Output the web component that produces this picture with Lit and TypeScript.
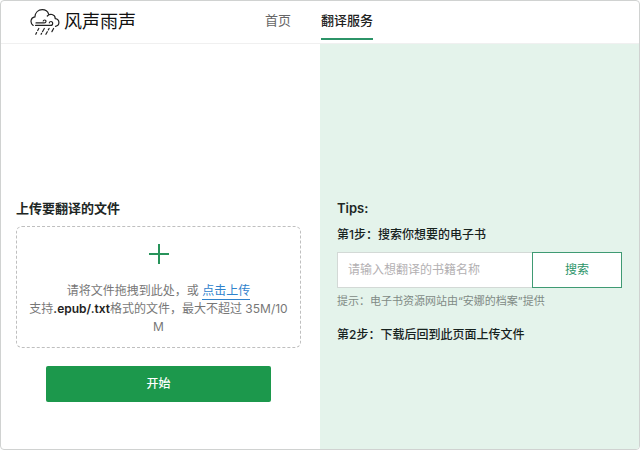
import { LitElement, html, css } from "lit";
import { customElement } from "lit/decorators.js";

@customElement("app-root")
export class AppRoot extends LitElement {
  static styles = css`
    :host {
      display: block;
      font-family: Inter, "Noto Sans CJK SC", sans-serif;
      font-size: 12px;
      line-height: 18px;
      color: #202624;
    }
    * {
      box-sizing: border-box;
    }
    .frame {
      display: flex;
      flex-direction: column;
      min-height: 100vh;
      border: 1px solid #d0d2d1;
      border-radius: 4px;
      overflow: hidden;
      background: #fff;
    }
    .header {
      display: grid;
      grid-template-columns: minmax(0, 1fr) minmax(0, 1fr);
      height: 43px;
      border-bottom: 1px solid #f0f0f0;
    }
    .brand {
      display: flex;
      align-items: center;
      gap: 4px;
      padding-left: 29px;
      font-size: 18px;
      line-height: 24px;
      color: #111;
      text-decoration: none;
    }
    .logo {
      width: 30px;
      height: 28px;
    }
    .nav {
      display: flex;
      gap: 30px;
      margin-left: -55px;
    }
    .nav-link {
      height: 39px;
      padding-top: 9px;
      font-size: 13px;
      line-height: 20px;
      color: #666;
      text-decoration: none;
      border-bottom: 2px solid transparent;
    }
    .nav-link.active {
      color: #222;
      font-weight: 500;
      border-bottom-color: #2c9468;
    }
    .columns {
      flex: 1;
      display: grid;
      grid-template-columns: minmax(0, 1fr) minmax(0, 1fr);
    }
    .upload {
      padding: 154px 19px 32px 15px;
    }
    .tips {
      padding: 154px 17px 32px;
      background: #e4f3eb;
    }
    .title {
      margin: 0;
      font-size: 13px;
      line-height: 20px;
      font-weight: 600;
    }
    .drop {
      margin-top: 8px;
      height: 122px;
      padding: 17px 8px 0;
      border: 1px dashed #bfbfbf;
      border-radius: 6px;
      text-align: center;
      color: #777;
    }
    .plus {
      display: block;
      width: 20px;
      height: 20px;
      margin: 0 auto 18px;
    }
    .drop p {
      margin: 0;
      word-break: break-all;
    }
    .drop strong {
      color: #222;
      font-weight: 600;
    }
    .pick {
      display: inline-block;
      line-height: 16px;
      color: #2f82cc;
      text-decoration: none;
      border-bottom: 1px solid #2f82cc;
    }
    .start {
      display: block;
      width: calc(100% - 60px);
      height: 36px;
      margin: 18px auto 0;
      padding: 0;
      border: 0;
      border-radius: 2px;
      background: #1c984c;
      color: #fff;
      font: inherit;
      font-weight: 500;
    }
    .step {
      display: block;
      margin: 8px 0 0;
      font-size: 12px;
      line-height: 18px;
      font-weight: 500;
      color: #17221e;
    }
    .search {
      display: flex;
      height: 36px;
      margin-top: 8px;
    }
    .query {
      flex: 1;
      min-width: 0;
      padding: 0 10px;
      border: 1px solid #d3d9d6;
      border-right: 0;
      border-radius: 0;
      background: #fff;
      font: inherit;
      color: #222;
      outline: none;
    }
    .query::placeholder {
      color: #b3b0b2;
      opacity: 1;
    }
    .go {
      width: 90px;
      padding: 0;
      border: 1px solid #3f9a73;
      background: #fff;
      color: #2c9468;
      font: inherit;
    }
    .hint {
      margin: 4px 0 0;
      font-size: 11px;
      line-height: 18px;
      color: #7f8a85;
    }
    .hint + .step {
      margin-top: 16px;
    }
  `;

  render() {
    return html`
      <div class="frame">
        <header class="header">
          <a class="brand" href="#">
            <svg class="logo" viewBox="0 0 30 28" fill="none" stroke="#222" stroke-width="1.2" stroke-linecap="round" aria-hidden="true">
              <path d="M3.2 17.4C-.2 15 .4 9.6 4.9 8.9C5.2 4.4 8.3 1.6 12.2 1.6c3.2 0 5.6 1.8 6.5 4.6M17.3 8c1.3-1.5 3-2 4.8-1.5 2.2.6 3.2 2.1 3.1 4.1 2.3.3 3.7 1.9 3.7 4 0 2-1.3 3.4-3.4 3.8" />
              <path d="M6 14.9h8.2c2.4 0 2.2-2.9.4-2.9-.8 0-1.3.4-1.4 1M5.6 17.4h15c2.8 0 2.6-3.9.4-3.9-1 0-1.6.5-1.7 1.3" />
              <path d="M8.8 20.5l-1.1 2M6.6 24.6l-.8 1.7M14.3 20.5l-1.8 3.2M11.6 25.3l-.5 1M19.1 20.5l-.8 1.4M17.3 23.7l-1.4 2.6M23.6 20.5l-1.7 3.1" />
            </svg>
            <span>风声雨声</span>
          </a>
          <nav class="nav">
            <a class="nav-link" href="#home">首页</a>
            <a class="nav-link active" href="#translate" aria-current="page">翻译服务</a>
          </nav>
        </header>
        <main class="columns">
          <section class="upload">
            <h2 class="title">上传要翻译的文件</h2>
            <div class="drop">
              <svg class="plus" viewBox="0 0 20 20" stroke="#27935a" stroke-width="2" aria-hidden="true">
                <path d="M10 0v20M0 10h20" />
              </svg>
              <p>请将文件拖拽到此处，或 <a class="pick" href="#upload">点击上传</a></p>
              <p>支持<strong>.epub/.txt</strong>格式的文件，最大不超过 35M/10M</p>
            </div>
            <button class="start" type="button">开始</button>
          </section>
          <section class="tips">
            <h2 class="title">Tips:</h2>
            <label class="step" for="query">第1步：搜索你想要的电子书</label>
            <form class="search" @submit=${(e: Event) => e.preventDefault()}>
              <input class="query" id="query" type="text" placeholder="请输入想翻译的书籍名称" />
              <button class="go" type="submit">搜索</button>
            </form>
            <p class="hint">提示：电子书资源网站由“安娜的档案”提供</p>
            <p class="step">第2步：下载后回到此页面上传文件</p>
          </section>
        </main>
      </div>
    `;
  }
}
